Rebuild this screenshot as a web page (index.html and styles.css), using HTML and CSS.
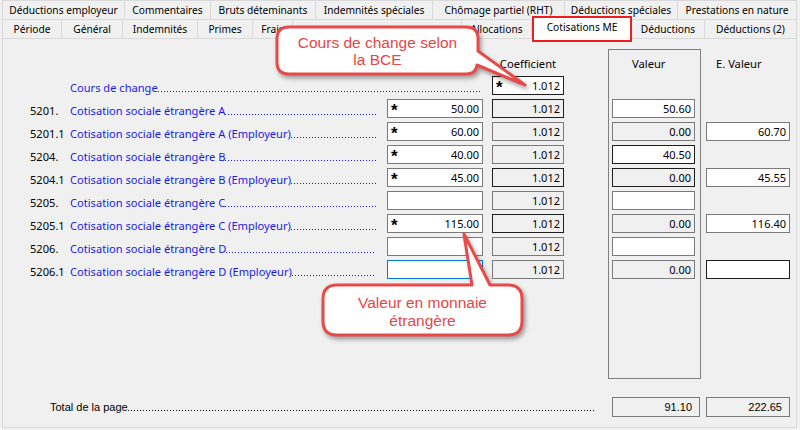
FILE: index.html
```html
<!DOCTYPE html>
<html lang="fr">
<head>
<meta charset="utf-8">
<title>Cotisations ME</title>
<link rel="stylesheet" href="styles.css">
</head>
<body>
<div class="window">
  <div class="tabrow row1">
    <div class="tab">Déductions employeur</div>
    <div class="tab">Commentaires</div>
    <div class="tab">Bruts déteminants</div>
    <div class="tab">Indemnités spéciales</div>
    <div class="tab">Chômage partiel (RHT)</div>
    <div class="tab">Déductions spéciales</div>
    <div class="tab">Prestations en nature</div>
  </div>
  <div class="tabrow row2">
    <div class="tab">Période</div>
    <div class="tab">Général</div>
    <div class="tab">Indemnités</div>
    <div class="tab">Primes</div>
    <div class="tab">Frais</div>
    <div class="tab"></div>
    <div class="tab">Allocations</div>
    <div class="tab active">Cotisations ME</div>
    <div class="tab">Déductions</div>
    <div class="tab">Déductions (2)</div>
  </div>

  <div class="panel">
    <div class="grid">
      <div class="frame"></div>

      <div class="row r1">
        <div class="hdr c-coef center">Coefficient</div>
        <div class="hdr c-val hv">Valeur</div>
        <div class="hdr c-ev hev">E. Valeur</div>
      </div>

      <div class="row r2">
        <div class="lbl wide"><span>Cours de change</span><span class="dots"></span></div>
        <div class="box c-coef dark"><span class="star">*</span><span class="num">1.012</span></div>
      </div>

      <div class="row r3">
        <div class="code">5201.</div>
        <div class="lbl"><span>Cotisation sociale étrangère A</span><span class="dots"></span></div>
        <div class="box c-in"><span class="star">*</span><span class="num">50.00</span></div>
        <div class="box c-coef ro dark"><span class="num">1.012</span></div>
        <div class="box c-val"><span class="num">50.60</span></div>
      </div>

      <div class="row r4">
        <div class="code">5201.1</div>
        <div class="lbl"><span>Cotisation sociale étrangère A (Employeur)</span><span class="dots"></span></div>
        <div class="box c-in"><span class="star">*</span><span class="num">60.00</span></div>
        <div class="box c-coef ro"><span class="num">1.012</span></div>
        <div class="box c-val ro"><span class="num">0.00</span></div>
        <div class="box c-ev"><span class="num">60.70</span></div>
      </div>

      <div class="row r5">
        <div class="code">5204.</div>
        <div class="lbl"><span>Cotisation sociale étrangère B</span><span class="dots"></span></div>
        <div class="box c-in"><span class="star">*</span><span class="num">40.00</span></div>
        <div class="box c-coef ro"><span class="num">1.012</span></div>
        <div class="box c-val dark"><span class="num">40.50</span></div>
      </div>

      <div class="row r6">
        <div class="code">5204.1</div>
        <div class="lbl"><span>Cotisation sociale étrangère B (Employeur)</span><span class="dots"></span></div>
        <div class="box c-in"><span class="star">*</span><span class="num">45.00</span></div>
        <div class="box c-coef ro dark"><span class="num">1.012</span></div>
        <div class="box c-val ro dark"><span class="num">0.00</span></div>
        <div class="box c-ev"><span class="num">45.55</span></div>
      </div>

      <div class="row r7">
        <div class="code">5205.</div>
        <div class="lbl"><span>Cotisation sociale étrangère C</span><span class="dots"></span></div>
        <div class="box c-in"></div>
        <div class="box c-coef ro"><span class="num">1.012</span></div>
        <div class="box c-val"></div>
      </div>

      <div class="row r8">
        <div class="code">5205.1</div>
        <div class="lbl"><span>Cotisation sociale étrangère C (Employeur)</span><span class="dots"></span></div>
        <div class="box c-in"><span class="star">*</span><span class="num">115.00</span></div>
        <div class="box c-coef ro dark"><span class="num">1.012</span></div>
        <div class="box c-val ro"><span class="num">0.00</span></div>
        <div class="box c-ev"><span class="num">116.40</span></div>
      </div>

      <div class="row r9">
        <div class="code">5206.</div>
        <div class="lbl short"><span>Cotisation sociale étrangère D</span><span class="dots"></span></div>
        <div class="box c-in"></div>
        <div class="box c-coef ro"><span class="num">1.012</span></div>
        <div class="box c-val"></div>
      </div>

      <div class="row r10">
        <div class="code">5206.1</div>
        <div class="lbl short"><span>Cotisation sociale étrangère D (Employeur)</span><span class="dots"></span></div>
        <div class="box c-in focus"></div>
        <div class="box c-coef ro"><span class="num">1.012</span></div>
        <div class="box c-val ro"><span class="num">0.00</span></div>
        <div class="box c-ev dark"></div>
      </div>
    </div>

    <div class="total">
      <div class="tlbl"><span>Total de la page</span><span class="dots"></span></div>
      <div class="tbox tb1">91.10</div>
      <div class="tbox tb2">222.65</div>
    </div>
  </div>

  <div class="callout c1">
    <svg class="shape" width="265" height="75" viewBox="0 0 265 75">
      <path d="M19 7 H196 Q208 7 208 19 V31 L255 65 L207 45 Q206 54 196 54 H19 Q7 54 7 42 V19 Q7 7 19 7 Z"/>
    </svg>
    <div class="ctext">Cours de change selon<br>la BCE</div>
  </div>

  <div class="callout c2">
    <svg class="shape" width="215" height="112" viewBox="0 0 215 112">
      <path d="M22 57 H157 L149 6 L175 57 H193 Q207 57 207 71 V93 Q207 107 193 107 H22 Q8 107 8 93 V71 Q8 57 22 57 Z"/>
    </svg>
    <div class="ctext">Valeur en monnaie<br>étrangère</div>
  </div>
</div>
</body>
</html>
```
FILE: styles.css
```css
* { box-sizing: border-box; }
html, body { margin: 0; height: 430px; overflow: hidden; }
body {
  background: #f0f0f0;
  font-family: "Noto Sans", "Liberation Sans", sans-serif;
  color: #000;
}
.window { position: relative; height: 430px; padding: 0 3px 0 2px; }

/* ---------- tabs ---------- */
.tabrow { display: flex; }
.row1 { height: 20px; }
.row2 { height: 18px; }
.tab {
  flex: none;
  display: flex;
  align-items: center;
  justify-content: center;
  white-space: nowrap;
  overflow: hidden;
  font-size: 10.2px;
  background: #f0f0f0;
  border-right: 1px solid #d9d9d9;
}
.tab:first-child { border-left: 1px solid #d9d9d9; }
.row1 .tab { border-top: 1px solid #d9d9d9; border-bottom: 1px solid #d9d9d9; }
.row1 .tab:nth-child(1) { width: 123px; }
.row1 .tab:nth-child(2) { width: 86px; }
.row1 .tab:nth-child(3) { width: 105px; }
.row1 .tab:nth-child(4) { width: 117px; }
.row1 .tab:nth-child(5) { width: 132px; }
.row1 .tab:nth-child(6) { width: 113px; }
.row1 .tab:nth-child(7) { width: 119px; }
.row2 .tab:nth-child(1) { width: 60px; }
.row2 .tab:nth-child(2) { width: 61px; }
.row2 .tab:nth-child(3) { width: 75px; }
.row2 .tab:nth-child(4) { width: 55px; }
.row2 .tab:nth-child(5) { width: 40px; }
.row2 .tab:nth-child(6) { width: 169px; }
.row2 .tab:nth-child(7) { width: 70px; }
.row2 .tab:nth-child(8) { width: 100px; }
.row2 .tab:nth-child(9) { width: 73px; }
.row2 .tab:nth-child(10) { width: 92px; }
.tab.active {
  position: relative;
  z-index: 2;
  align-self: flex-start;
  height: 26px;
  margin-top: -4px;
  padding-bottom: 4px;
  background: #fff;
  border: 2px solid #ee1c1c;
}

/* ---------- panel ---------- */
.panel {
  height: 390px;
  border: 1px solid #d9d9d9;
  background: #f0f0f0;
}
.grid {
  display: grid;
  margin-top: 10px;
  padding-left: 27px;
  grid-template-columns: 40px 317px 96px 9px 72px 44px 93px 5px 84px;
  grid-template-rows: 23px repeat(9, 19px) 96px;
  row-gap: 4px;
}
.row { display: contents; }
.r1 > * { grid-row: 1; }
.r2 > * { grid-row: 2; }
.r3 > * { grid-row: 3; }
.r4 > * { grid-row: 4; }
.r5 > * { grid-row: 5; }
.r6 > * { grid-row: 6; }
.r7 > * { grid-row: 7; }
.r8 > * { grid-row: 8; }
.r9 > * { grid-row: 9; }
.r10 > * { grid-row: 10; }

.frame {
  grid-column: 7;
  grid-row: 1 / 12;
  border: 1px solid #808080;
}

.code { grid-column: 1; }
.lbl { grid-column: 2; }
.lbl.wide { grid-column: 2 / 5; padding-right: 12px; }
.c-in { grid-column: 3; }
.c-coef { grid-column: 5; }
.c-val { grid-column: 7; margin-left: 4px; width: 83px; }
.c-ev { grid-column: 9; }

.hdr {
  align-self: end;
  font-size: 11.2px;
  line-height: 14px;
  padding-bottom: 1px;
  white-space: nowrap;
}
.hdr.center { justify-self: center; }
.hdr.hv { padding-left: 20px; }
.hdr.hev { padding-left: 10px; }

.code, .lbl {
  display: flex;
  align-items: center;
  padding-top: 4px;
  font-size: 11.1px;
  white-space: nowrap;
}
.lbl { color: #1a1ae6; padding-right: 11px; }
.lbl.short { padding-right: 13px; }
.dots {
  flex: 1;
  height: 1px;
  margin-top: 8px;
  background: repeating-linear-gradient(90deg, currentColor 0 1px, transparent 1px 3px);
}

.box {
  height: 19px;
  display: flex;
  align-items: center;
  padding: 0 3px;
  border: 1px solid #7a7a7a;
  background: #fff;
  font-size: 11px;
}
.box.ro { background: #f0f0f0; }
.box.dark { border-color: #1e1e1e; }
.box.focus { border-color: #0078d7; }
.num { margin-left: auto; }
.star {
  align-self: flex-start;
  margin-top: 3px;
  font: bold 17px/16px "Liberation Sans", sans-serif;
}

/* ---------- total ---------- */
.total {
  display: flex;
  align-items: center;
  margin-top: 18px;
  padding-left: 47px;
  font-family: "Liberation Sans", sans-serif;
  font-size: 11px;
}
.tlbl {
  width: 558px;
  display: flex;
  align-items: center;
  padding-right: 14px;
  white-space: nowrap;
}
.tlbl .dots { margin-top: 7px; }
.tbox {
  height: 20px;
  display: flex;
  align-items: center;
  justify-content: flex-end;
  padding-right: 7px;
  border: 1px solid #7a7a7a;
  background: #f0f0f0;
}
.tb1 { margin-left: 4px; width: 88px; }
.tb2 { margin-left: 6px; width: 84px; }

/* ---------- callouts ---------- */
.callout { position: absolute; z-index: 5; }
.c1 { left: 270px; top: 20px; width: 265px; height: 75px; }
.c2 { left: 315px; top: 228px; width: 215px; height: 112px; }
.shape {
  display: block;
  filter: drop-shadow(2px 3px 2px rgba(0, 0, 0, 0.35));
}
.shape path {
  fill: #fff;
  stroke: #e84a4a;
  stroke-width: 3;
  stroke-linejoin: round;
}
.ctext {
  position: absolute;
  display: flex;
  align-items: center;
  justify-content: center;
  text-align: center;
  font: 15.5px/17px "Liberation Sans", sans-serif;
  color: #e64646;
}
.c1 .ctext { left: 7px; top: 7px; width: 201px; height: 47px; }
.c2 .ctext { left: 8px; top: 57px; width: 199px; height: 50px; padding-top: 3px; line-height: 18px; }
```
